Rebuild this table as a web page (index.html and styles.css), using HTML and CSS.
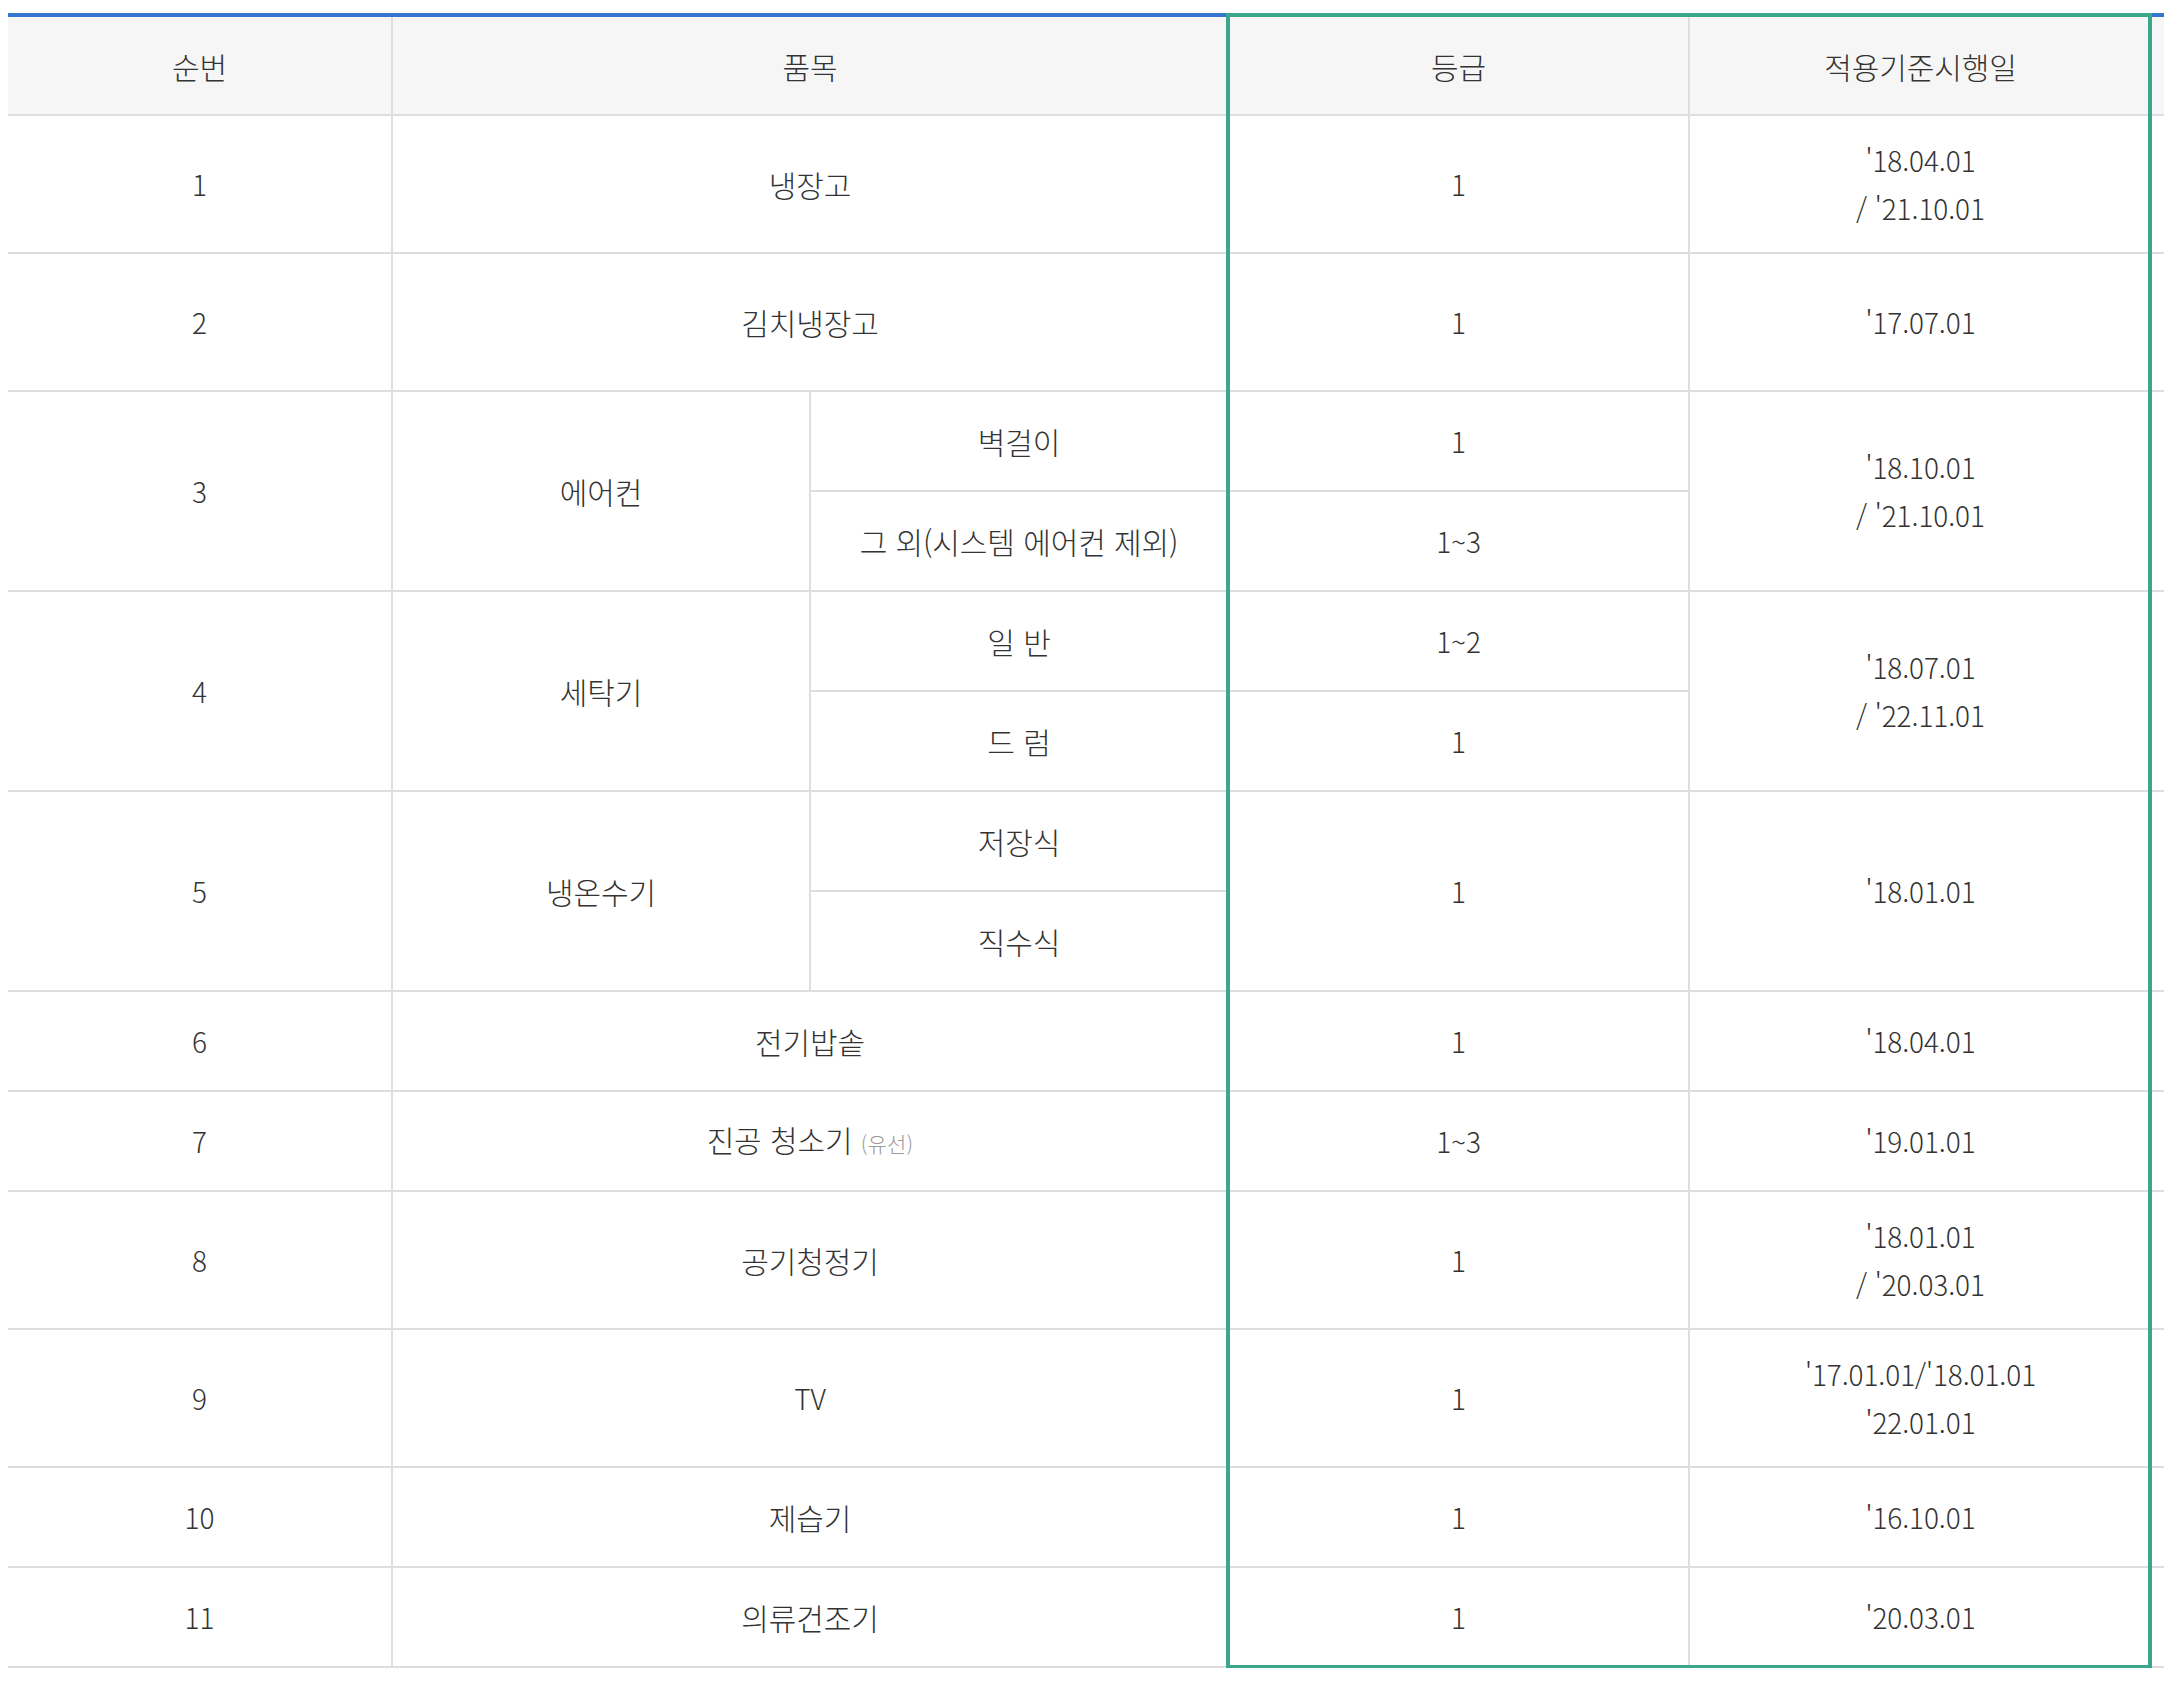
FILE: index.html
```html
<!DOCTYPE html>
<html lang="ko">
<head>
<meta charset="utf-8">
<title>효율등급 기준</title>
<link rel="stylesheet" href="styles.css">
</head>
<body>
<div class="wrap">
  <table class="grade">
    <colgroup>
      <col class="c-no">
      <col class="c-item">
      <col class="c-sub">
      <col class="c-grade">
      <col class="c-date">
    </colgroup>
    <thead>
      <tr>
        <th class="k">순번</th>
        <th class="k" colspan="2">품목</th>
        <th class="k">등급</th>
        <th class="k d">적용기준시행일</th>
      </tr>
    </thead>
    <tbody>
      <tr class="tall">
        <td>1</td>
        <td class="k" colspan="2">냉장고</td>
        <td>1</td>
        <td class="d">'18.04.01<br>/ '21.10.01</td>
      </tr>
      <tr class="tall">
        <td>2</td>
        <td class="k" colspan="2">김치냉장고</td>
        <td>1</td>
        <td class="d">'17.07.01</td>
      </tr>
      <tr class="short">
        <td rowspan="2">3</td>
        <td class="k" rowspan="2">에어컨</td>
        <td class="k">벽걸이</td>
        <td>1</td>
        <td class="d" rowspan="2">'18.10.01<br>/ '21.10.01</td>
      </tr>
      <tr class="short">
        <td class="k">그 외(시스템 에어컨 제외)</td>
        <td>1~3</td>
      </tr>
      <tr class="short">
        <td rowspan="2">4</td>
        <td class="k" rowspan="2">세탁기</td>
        <td class="k">일 반</td>
        <td>1~2</td>
        <td class="d" rowspan="2">'18.07.01<br>/ '22.11.01</td>
      </tr>
      <tr class="short">
        <td class="k">드 럼</td>
        <td>1</td>
      </tr>
      <tr class="short">
        <td rowspan="2">5</td>
        <td class="k" rowspan="2">냉온수기</td>
        <td class="k">저장식</td>
        <td rowspan="2">1</td>
        <td class="d" rowspan="2">'18.01.01</td>
      </tr>
      <tr class="short">
        <td class="k">직수식</td>
      </tr>
      <tr class="short">
        <td>6</td>
        <td class="k" colspan="2">전기밥솥</td>
        <td>1</td>
        <td class="d">'18.04.01</td>
      </tr>
      <tr class="short">
        <td>7</td>
        <td class="k" colspan="2">진공 청소기 <span class="note">(유선)</span></td>
        <td>1~3</td>
        <td class="d">'19.01.01</td>
      </tr>
      <tr class="tall">
        <td>8</td>
        <td class="k" colspan="2">공기청정기</td>
        <td>1</td>
        <td class="d">'18.01.01<br>/ '20.03.01</td>
      </tr>
      <tr class="tall">
        <td>9</td>
        <td colspan="2">TV</td>
        <td>1</td>
        <td class="d">'17.01.01/'18.01.01<br>'22.01.01</td>
      </tr>
      <tr class="short">
        <td>10</td>
        <td class="k" colspan="2">제습기</td>
        <td>1</td>
        <td class="d">'16.10.01</td>
      </tr>
      <tr class="short">
        <td>11</td>
        <td class="k" colspan="2">의류건조기</td>
        <td>1</td>
        <td class="d">'20.03.01</td>
      </tr>
    </tbody>
  </table>
  <div class="highlight"></div>
</div>
</body>
</html>
```

FILE: styles.css
```css
html {
  overflow: hidden;
  background: #ffffff;
}

body {
  margin: 13px 0 0 8px;
  font-family: "Noto Sans CJK KR", "Noto Sans", sans-serif;
  font-weight: 300;
  color: #333333;
}

.wrap {
  position: relative;
  width: 2156px;
}

.grade {
  width: 2156px;
  table-layout: fixed;
  border-collapse: collapse;
  font-size: 28px;
  line-height: 48px;
  letter-spacing: -0.1px;
  text-align: center;
}

.c-no { width: 384px; }
.c-item { width: 418px; }
.c-sub { width: 418px; }
.c-grade { width: 461px; }
.c-date { width: 475px; }

.grade th,
.grade td {
  padding: 0;
  border: 2px solid #dedede;
  font-weight: 300;
  vertical-align: middle;
}

.grade .k {
  font-size: 30px;
  letter-spacing: -0.1px;
}

.grade .d {
  padding-right: 13px;
  border-right: none;
}

.grade tr > :first-child {
  border-left: none;
}

.grade thead th {
  height: 97px;
  background: #f6f6f6;
  border-top: 4px solid #3676d0;
}

.grade tr.tall td {
  height: 136px;
}

.grade tr.short td {
  height: 98px;
}

.note {
  font-size: 21px;
  color: #9a9a9a;
  letter-spacing: 0.2px;
}

.highlight {
  position: absolute;
  left: 1218px;
  top: 0;
  width: 926px;
  height: 1656px;
  box-sizing: border-box;
  border: 4px solid #3aa68c;
  pointer-events: none;
}
```
